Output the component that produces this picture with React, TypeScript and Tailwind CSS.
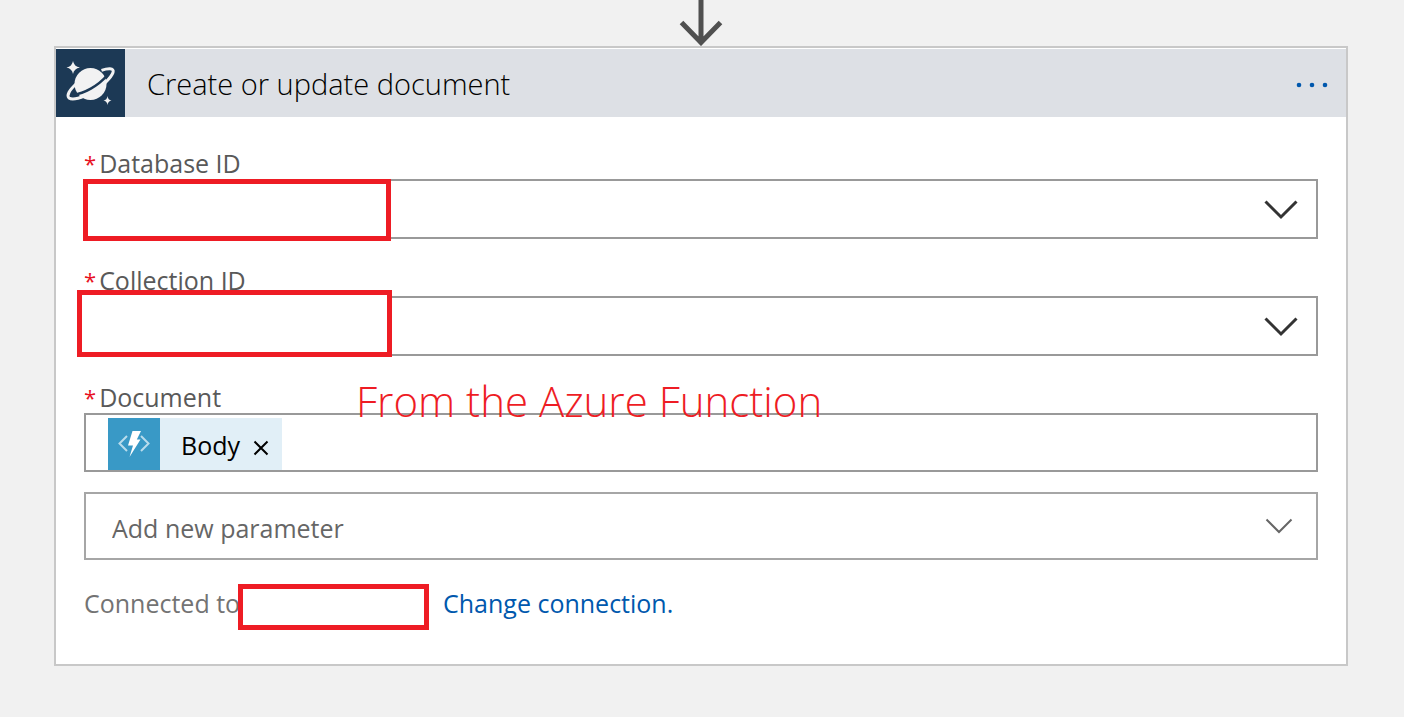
import { useState } from "react";

function CosmosIcon() {
  return (
    <svg viewBox="0 0 69 68" className="h-[68px] w-[69px] shrink-0 bg-[#1c3955]" aria-hidden="true">
      <circle cx="34.500" cy="35" r="16" fill="#f2f2f2" />
      <path d="M17.500 45.800 C28 44.500 42 37 51 26.500" fill="none" stroke="#1c3955" strokeWidth="2.600" />
      <path
        d="M20 35 C13 41.500 10.500 46.500 13 49 C18 52.500 38 45 49.500 33.500 C58 25 59.500 20 54 19.800 C51 19.700 48.500 20.300 45.500 21.300"
        fill="none"
        stroke="#f2f2f2"
        strokeWidth="3"
      />
      <path d="M17 12 Q18 17.500 24 18.500 Q18 19.500 17 25 Q16 19.500 10.500 18.500 Q16 17.500 17 12Z" fill="#f2f2f2" />
      <path d="M51.500 47 Q52 51 55.500 51.500 Q52 52 51.500 56 Q51 52 47.500 51.500 Q51 51 51.500 47Z" fill="#f2f2f2" />
    </svg>
  );
}

function FunctionIcon() {
  return (
    <svg viewBox="0 0 52 52" className="h-[52px] w-[52px] shrink-0 bg-[#3999c6]" aria-hidden="true">
      <path d="M19 18 L11.500 25.500 L19 33 M33 18 L40.500 25.500 L33 33" fill="none" stroke="#b9dcec" strokeWidth="2" />
      <path d="M24.500 13 H33 L28.800 21.500 H32.500 L21.500 39 L25 27.500 H20 Z" fill="#fff" />
    </svg>
  );
}

function FieldLabel({ id, label }: { id: string; label: string }) {
  return (
    <label htmlFor={id} className="flex h-8 items-center gap-[3px] text-[25px] leading-8 text-[#595959]">
      <span className="text-[22px] text-[#e81123]">*</span>
      {label}
    </label>
  );
}

function SelectField({ id, label }: { id: string; label: string }) {
  return (
    <div>
      <FieldLabel id={id} label={label} />
      <div className="relative">
        <select id={id} className="block h-[60px] w-full appearance-none border-2 border-[#999] bg-white px-6 text-[25px] outline-none">
          <option value=""></option>
        </select>
        <svg viewBox="0 0 34 20" className="pointer-events-none absolute top-[21px] right-5 h-5 w-[34px]" aria-hidden="true">
          <path d="M1.500 1.500 L17 17 L32.500 1.500" fill="none" stroke="#333" strokeWidth="3" />
        </svg>
      </div>
    </div>
  );
}

export default function App() {
  const [hasBody, setHasBody] = useState(true);
  return (
    <main className="min-h-screen bg-[#f1f1f1] px-[54px] pb-[51px] font-['Open_Sans',sans-serif]">
      <div className="flex h-[46px] justify-center pr-[2px]">
        <svg viewBox="0 0 44 46" className="h-[46px] w-11" aria-hidden="true">
          <path d="M22 0 V42 M2.500 22.500 L22 42.500 L41.500 22.500" fill="none" stroke="#505050" strokeWidth="5" />
        </svg>
      </div>

      <section className="mr-[2px] border-2 border-[#c8c8c8] bg-white pt-px">
        <header className="flex items-center bg-[#dde0e5]">
          <CosmosIcon />
          <h1 className="ml-[22px] flex-1 pt-[2px] text-[29px] leading-9 font-light text-black">Create or update document</h1>
          <button type="button" aria-label="More options" className="mt-1 mr-[17px] p-0">
            <svg viewBox="0 0 34 8" className="h-2 w-[34px]" fill="#0058ad" aria-hidden="true">
              <circle cx="4" cy="4" r="2.300" />
              <circle cx="17" cy="4" r="2.300" />
              <circle cx="30" cy="4" r="2.300" />
            </svg>
          </button>
        </header>

        <div className="px-7 pt-[30px] pb-[34px]">
          <div className="flex flex-col gap-[25px]">
            <div className="relative">
              <SelectField id="database" label="Database ID" />
              <div className="absolute top-8 -left-px h-[62px] w-[308px] border-5 border-[#ee1c24] bg-white" />
            </div>
            <div className="relative">
              <SelectField id="collection" label="Collection ID" />
              <div className="absolute top-[26px] -left-[7px] h-[67px] w-[315px] border-5 border-[#ee1c24] bg-white" />
            </div>
            <div className="relative">
              <FieldLabel id="document" label="Document" />
              <div className="flex h-[59px] items-end border-2 border-[#999] bg-white pl-[22px]">
                {hasBody && (
                  <div className="flex h-[52px] items-center bg-[#e1eff7] pr-3 text-[25px] text-black">
                    <FunctionIcon />
                    <span className="mt-1 ml-[21px]">Body</span>
                    <button type="button" aria-label="Remove Body" onClick={() => setHasBody(false)} className="mt-2 ml-3">
                      <svg viewBox="0 0 18 18" className="h-[18px] w-[18px]" aria-hidden="true">
                        <path d="M2.500 2.500 L15.500 15.500 M15.500 2.500 L2.500 15.500" stroke="#000" strokeWidth="2" />
                      </svg>
                    </button>
                  </div>
                )}
                <input id="document" className="h-full min-w-0 flex-1 bg-transparent px-2 text-[25px] outline-none" />
              </div>
              <p className="pointer-events-none absolute -top-[10px] left-[272px] text-[42px] leading-[60px] font-light whitespace-nowrap text-[#ee1c24]">
                From the Azure Function
              </p>
            </div>
          </div>

          <div className="relative mt-5">
            <select
              aria-label="Add new parameter"
              className="block h-[68px] w-full appearance-none border-2 border-[#a6a6a6] bg-white px-[26px] pt-[6px] text-[25px] text-[#666] outline-none"
            >
              <option>Add new parameter</option>
            </select>
            <svg viewBox="0 0 28 16" className="pointer-events-none absolute top-[26px] right-[25px] h-4 w-7" aria-hidden="true">
              <path d="M1.500 1.500 L14 14 L26.500 1.500" fill="none" stroke="#666" strokeWidth="2" />
            </svg>
          </div>

          <div className="mt-6 flex h-[46px] text-[25px] leading-[38px]">
            <span className="w-[154px] whitespace-nowrap text-[#737373]">Connected to</span>
            <div className="w-[191px] border-5 border-[#ee1c24] bg-white" />
            <a href="#connection" className="ml-[14px] text-[#0058ad]">
              Change connection.
            </a>
          </div>
        </div>
      </section>
    </main>
  );
}
